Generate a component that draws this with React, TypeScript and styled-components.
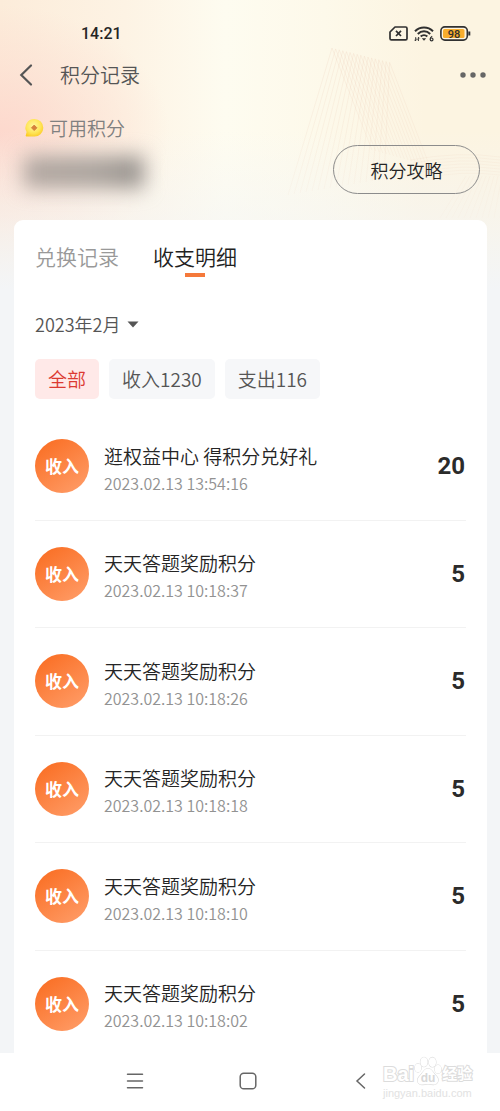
import React, { useState } from "react";
import styled, { createGlobalStyle, css } from "styled-components";

const Global = createGlobalStyle`
  *, *::before, *::after { box-sizing: border-box; }
  body {
    margin: 0;
    background: #f3f5f7;
    font-family: "Noto Sans CJK SC", "Noto Sans", sans-serif;
    font-weight: 350;
    color: #252525;
  }
  button, select { font: inherit; color: inherit; margin: 0; padding: 0; border: 0; background: none; cursor: pointer; }
  h1, p, ul { margin: 0; padding: 0; }
  ul { list-style: none; }
`;

const Page = styled.div`
  position: relative;
  display: flex;
  flex-direction: column;
  min-height: 100vh;
  overflow: hidden;
`;

const Backdrop = styled.div`
  position: absolute;
  inset: 0 0 auto 0;
  height: 310px;
  background:
    linear-gradient(to bottom, rgba(243, 245, 247, 0) 130px, rgba(243, 245, 247, 0.45) 215px, #f3f5f7 290px),
    radial-gradient(ellipse 170px 130px at 0 135px, #fdd8cd 0%, rgba(253, 216, 205, 0.45) 50%, rgba(253, 216, 205, 0) 100%),
    linear-gradient(to right, #fcecda 0%, #fdf3e4 25%, #fefcf0 45%, #fdf9ea 65%, #fcf4e1 85%, #fcf4e1 100%);
`;

const Mesh = styled.svg`
  position: absolute;
  top: 0;
  right: 0;
`;

const StatusBar = styled.div`
  position: relative;
  display: flex;
  align-items: center;
  justify-content: space-between;
  height: 44px;
  padding: 23px 29px 0 81px;
  font-family: Roboto, sans-serif;
  font-size: 16px;
  line-height: 20px;
  font-weight: 500;
`;

const StatusIcons = styled.div`
  display: flex;
  align-items: center;
  gap: 6px;
`;

const TitleBar = styled.header`
  position: relative;
  display: flex;
  align-items: center;
  gap: 18px;
  height: 62px;
  padding: 0 14px 0 12px;
  color: #555;
`;

const Title = styled.h1`
  flex: 1;
  font-size: 20px;
  line-height: 28px;
  font-weight: 350;
`;

const IconButton = styled.button`
  display: grid;
  place-items: center;
  height: 40px;
`;

const Summary = styled.section`
  position: relative;
  display: flex;
  justify-content: space-between;
  align-items: flex-end;
  padding: 8px 20px 26px 24px;
`;

const Balance = styled.div`
  display: flex;
  flex-direction: column;
  height: 80px;
`;

const BalanceLabel = styled.p`
  display: flex;
  align-items: center;
  gap: 5px;
  font-size: 19px;
  line-height: 28px;
  color: #808080;
`;

const HiddenAmount = styled.div`
  width: 120px;
  height: 32px;
  margin-top: 14px;
  background: linear-gradient(to right, #b0a6a0, #aaa39d 60%, #94908c);
  filter: blur(10px);
`;

const GuideButton = styled.button`
  height: 49px;
  width: 147px;
  border: 1px solid #8c8c8c;
  border-radius: 25px;
  font-size: 18px;
  line-height: 24px;
`;

const Card = styled.main`
  position: relative;
  flex: 1;
  display: flex;
  flex-direction: column;
  margin: 0 13px 0 14px;
  padding: 20px 21px 0;
  background: #fff;
  border-radius: 9px 9px 0 0;
`;

const Tabs = styled.div`
  display: flex;
  gap: 34px;
`;

const Tab = styled.button<{ $active: boolean }>`
  position: relative;
  height: 38px;
  font-size: 21px;
  line-height: 32px;
  padding-bottom: 6px;
  color: ${(p) => (p.$active ? "#222" : "#999")};
  ${(p) =>
    p.$active &&
    css`
      &::after {
        content: "";
        position: absolute;
        left: 50%;
        bottom: 1px;
        width: 20px;
        height: 4px;
        margin-left: -10px;
        background: #f5793a;
      }
    `}
`;

const Month = styled.label`
  display: flex;
  align-items: center;
  gap: 6px;
  margin-top: 32px;
  align-self: flex-start;
  color: #555;
`;

const MonthSelect = styled.select`
  appearance: none;
  font-size: 18px;
  line-height: 28px;
  outline: none;
`;

const Filters = styled.div`
  display: flex;
  gap: 10px;
  margin-top: 21px;
`;

const Filter = styled.button<{ $active: boolean }>`
  height: 40px;
  padding: 0 13px;
  border-radius: 5px;
  font-size: 19px;
  line-height: 40px;
  color: ${(p) => (p.$active ? "#dc3a32" : "#555")};
  background: ${(p) => (p.$active ? "#ffe9e8" : "#f6f7f9")};
`;

/* The list runs on a little below the navigation bar. */
const List = styled.ul`
  flex: 1;
  display: flex;
  flex-direction: column;
  margin: 14px 0 -5px;
`;

const Row = styled.li`
  flex: 1 1 107px;
  display: flex;
  align-items: center;
  gap: 15px;
  padding-right: 1px;
  border-bottom: 1px solid #f2f2f2;
`;

const Badge = styled.span`
  display: grid;
  place-items: center;
  width: 54px;
  height: 54px;
  border-radius: 50%;
  background: linear-gradient(145deg, #fa7026 10%, #ff9c67 95%);
  color: #fff;
  font-size: 17px;
  line-height: 24px;
  font-weight: 700;
`;

const Detail = styled.div`
  flex: 1;
  min-width: 0;
  padding-top: 5px;
`;

const Name = styled.p`
  font-size: 19px;
  line-height: 28px;
`;

const Time = styled.p`
  font-size: 16px;
  line-height: 26px;
  color: #929292;
`;

const Points = styled.strong`
  font-family: Roboto, sans-serif;
  font-size: 24px;
  line-height: 28px;
  font-weight: 700;
  color: #2b2b2b;
`;

const NavBar = styled.nav`
  position: relative;
  display: flex;
  justify-content: center;
  gap: 77px;
  align-items: center;
  height: 58px;
  padding: 0 4px 2px 0;
  background: #fff;
  color: #666;
`;

const NavButton = styled.button`
  display: grid;
  place-items: center;
  width: 36px;
  height: 40px;
`;

const Watermark = styled.div`
  position: absolute;
  right: 27px;
  bottom: 11px;
  width: 90px;
  pointer-events: none;
  font-family: "Liberation Sans", "Noto Sans CJK SC", sans-serif;
  color: #fff;
  -webkit-text-stroke: 2px #dcdcdc;
  paint-order: stroke fill;
`;

const Brand = styled.div`
  display: flex;
  align-items: flex-end;
  font-size: 20px;
  line-height: 24px;
  font-weight: 700;
`;

const BrandSuffix = styled.span`
  font-size: 15px;
`;

const Site = styled.div`
  font-size: 11px;
  line-height: 14px;
  color: #e2e2e2;
  -webkit-text-stroke: 0;
`;

const SimIcon = () => (
  <svg width="19" height="15" viewBox="0 0 19 15" fill="none" stroke="#303030" strokeWidth="1.7" aria-hidden="true">
    <path d="M6 1H16.6Q18 1 18 2.4V12.4Q18 13.8 16.6 13.8H2.4Q1 13.8 1 12.4V6Z" strokeLinejoin="round" />
    <path d="M7 4.8L12 10M12 4.8L7 10" />
  </svg>
);

const WifiIcon = () => (
  <svg width="20" height="16" viewBox="0 0 20 16" fill="none" stroke="#303030" strokeWidth="2" aria-hidden="true">
    <path d="M1 5.2C6 .2 14 .2 19 5.2M3.8 8C7.4 4.4 12.6 4.4 16.2 8M6.7 10.6C8.6 8.8 11.4 8.8 13.3 10.6" />
    <path d="M7.8 12.2H12.2L10 14.8Z" fill="#303030" stroke="none" />
    <path d="M1.7 11.2V15M.5 13.8L1.7 15M4.4 15V11.2L5.6 12.4M3 12.6V14" strokeWidth="1" />
    <path d="M18.2 10.3Q16.2 11.2 16.2 13.2" strokeWidth="1.2" />
    <circle cx="17.6" cy="13.4" r="1.4" strokeWidth="1.2" />
  </svg>
);

const BatteryIcon = () => (
  <svg width="31" height="15" viewBox="0 0 31 15" aria-label="98">
    <rect x=".9" y=".9" width="26.4" height="13.2" rx="4" fill="none" stroke="#303030" strokeWidth="1.6" />
    <rect x="3" y="3" width="21.5" height="9" rx="1.5" fill="#f9ad2c" />
    <path d="M29.3 5.5V9.5" stroke="#303030" strokeWidth="2" />
    <text x="14" y="11.5" textAnchor="middle" fontFamily="Roboto, sans-serif" fontSize="11" fontWeight="500" fill="#303030">
      98
    </text>
  </svg>
);

const CoinIcon = () => (
  <svg width="20" height="20" viewBox="0 0 20 20" aria-hidden="true">
    <defs>
      <radialGradient id="coin" cx=".45" cy=".4" r=".65">
        <stop offset="0" stopColor="#fff6a0" />
        <stop offset=".6" stopColor="#ffe65a" />
        <stop offset="1" stopColor="#fccb22" />
      </radialGradient>
    </defs>
    <path d="M10.5 1A8.7 8.7 0 1 1 10.5 18.6H3Q1 18.6 2 16.6L2.6 14A8.7 8.7 0 0 1 10.5 1Z" fill="url(#coin)" />
    <path d="M10.2 7.1L12.9 9.8L10.2 12.5L7.5 9.8Z" fill="#d6813c" stroke="#d6813c" strokeLinejoin="round" />
  </svg>
);

const lines = (n: number, f: (i: number) => string) => Array.from({ length: n }, (_, i) => f(i)).join("");

const MeshArt = () => (
  <Mesh width="220" height="220" viewBox="0 0 220 220" fill="none" strokeWidth=".8" aria-hidden="true">
    <defs>
      <linearGradient id="mesh" gradientUnits="userSpaceOnUse" x1="0" y1="45" x2="0" y2="215">
        <stop offset="0" stopColor="#eccdb8" stopOpacity=".32" />
        <stop offset=".5" stopColor="#eccdb8" stopOpacity=".24" />
        <stop offset="1" stopColor="#eccdb8" stopOpacity=".08" />
      </linearGradient>
    </defs>
    <g stroke="url(#mesh)">
      <path d={lines(17, (i) => `M${52 + i * 3.6} ${48 + i * 0.9}L${8 + i * 6} ${195 - i}`)} />
      <path d={lines(17, (i) => `M${52 + i * 3.6} ${48 + i * 0.9}L${92 + i * 3.6} ${150 + i}`)} />
      <path d={lines(7, (i) => `M${130 + i * 3} ${160 + i * 3}Q180 ${151 + i * 3.2} 220 ${157 + i * 3}`)} />
      <path d={lines(12, (i) => `M${186 + i * 4} 176L${160 + i * 6} 218`)} />
    </g>
  </Mesh>
);

const Paw = () => (
  <svg width="28" height="30" viewBox="0 0 28 30" fill="#fff" stroke="#dcdcdc" strokeWidth="1.1" aria-hidden="true">
    <ellipse cx="10" cy="6" rx="3.6" ry="4.8" />
    <ellipse cx="18.4" cy="6.2" rx="3.6" ry="4.8" />
    <ellipse cx="4" cy="12" rx="3.2" ry="4.2" />
    <ellipse cx="24" cy="13.2" rx="3.2" ry="4.2" />
    <path d="M14 12.5C18 12.5 19 17 22.5 20.2C26 24 23.5 28.8 19.5 28.6C16 28.2 12 28.2 8.5 28.6C3.5 28.8 2 24 5.5 20.2C9 17 10 12.5 14 12.5Z" />
    <text x="14" y="26" textAnchor="middle" fontSize="12" fontWeight="700" fill="#d8d8d8" stroke="none">
      du
    </text>
  </svg>
);

const records = [
  { name: "逛权益中心 得积分兑好礼", time: "2023.02.13 13:54:16", points: 20 },
  { name: "天天答题奖励积分", time: "2023.02.13 10:18:37", points: 5 },
  { name: "天天答题奖励积分", time: "2023.02.13 10:18:26", points: 5 },
  { name: "天天答题奖励积分", time: "2023.02.13 10:18:18", points: 5 },
  { name: "天天答题奖励积分", time: "2023.02.13 10:18:10", points: 5 },
  { name: "天天答题奖励积分", time: "2023.02.13 10:18:02", points: 5 },
];

const tabs = ["兑换记录", "收支明细"];
const filters = ["全部", "收入1230", "支出116"];

export default function App() {
  const [tab, setTab] = useState(1);
  const [filter, setFilter] = useState(0);

  return (
    <Page>
      <Global />
      <Backdrop>
        <MeshArt />
      </Backdrop>
      <StatusBar>
        <span>14:21</span>
        <StatusIcons>
          <SimIcon />
          <WifiIcon />
          <BatteryIcon />
        </StatusIcons>
      </StatusBar>
      <TitleBar>
        <IconButton aria-label="返回">
          <svg width="30" height="24" viewBox="0 0 30 24" fill="none" stroke="#555" strokeWidth="2.2" strokeLinecap="round">
            <path d="M19 2.5L9.3 12L19 21.5" />
          </svg>
        </IconButton>
        <Title>积分记录</Title>
        <IconButton aria-label="更多">
          <svg width="26" height="6" viewBox="0 0 26 6" fill="#666">
            <circle cx="3" cy="3" r="2.7" />
            <circle cx="13" cy="3" r="2.7" />
            <circle cx="23" cy="3" r="2.7" />
          </svg>
        </IconButton>
      </TitleBar>
      <Summary>
        <Balance>
          <BalanceLabel>
            <CoinIcon />
            可用积分
          </BalanceLabel>
          <HiddenAmount />
        </Balance>
        <GuideButton>积分攻略</GuideButton>
      </Summary>
      <Card>
        <Tabs role="tablist">
          {tabs.map((label, i) => (
            <Tab key={label} role="tab" aria-selected={tab === i} $active={tab === i} onClick={() => setTab(i)}>
              {label}
            </Tab>
          ))}
        </Tabs>
        <Month>
          <MonthSelect aria-label="月份">
            <option>2023年2月</option>
          </MonthSelect>
          <svg width="12" height="7" viewBox="0 0 12 7" fill="#555" aria-hidden="true">
            <path d="M.5 .5H11.5L6 6.5Z" />
          </svg>
        </Month>
        <Filters>
          {filters.map((label, i) => (
            <Filter key={label} aria-pressed={filter === i} $active={filter === i} onClick={() => setFilter(i)}>
              {label}
            </Filter>
          ))}
        </Filters>
        <List>
          {records.map((r) => (
            <Row key={r.time}>
              <Badge>收入</Badge>
              <Detail>
                <Name>{r.name}</Name>
                <Time>{r.time}</Time>
              </Detail>
              <Points>{r.points}</Points>
            </Row>
          ))}
        </List>
      </Card>
      <NavBar>
        <NavButton aria-label="菜单">
          <svg width="18" height="18" viewBox="0 0 18 18" stroke="currentColor" strokeWidth="1.5" strokeLinecap="round">
            <path d="M1.5 2.2H16.5M1.5 9H16.5M1.5 15.8H16.5" />
          </svg>
        </NavButton>
        <NavButton aria-label="主页">
          <svg width="18" height="18" viewBox="0 0 18 18" fill="none" stroke="currentColor" strokeWidth="1.5">
            <rect x="1.2" y="1.2" width="15.6" height="15.6" rx="3.6" />
          </svg>
        </NavButton>
        <NavButton aria-label="后退">
          <svg width="18" height="18" viewBox="0 0 18 18" fill="none" stroke="currentColor" strokeWidth="1.5" strokeLinecap="round">
            <path d="M12.5 2L5 9L12.5 16" />
          </svg>
        </NavButton>
        <Watermark>
          <Brand>
            Bai
            <Paw />
            <BrandSuffix>经验</BrandSuffix>
          </Brand>
          <Site>jingyan.baidu.com</Site>
        </Watermark>
      </NavBar>
    </Page>
  );
}
